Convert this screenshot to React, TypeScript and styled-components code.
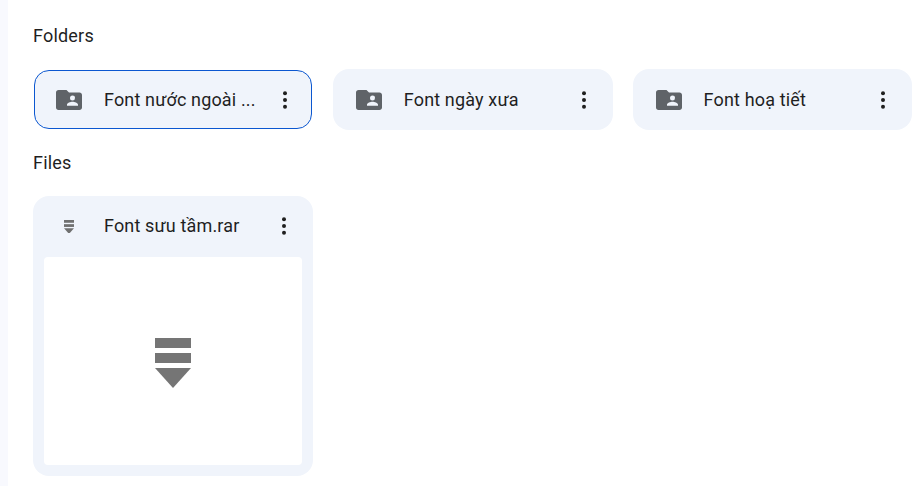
import React from "react";
import styled, { createGlobalStyle } from "styled-components";

const Global = createGlobalStyle`
  html, body { margin: 0; padding: 0; background: #fff; overflow: hidden; }
  body { font-family: Roboto, "Noto Sans", Arial, sans-serif; color: #1f1f1f; }
`;

const Page = styled.div`
  display: flex;
  width: 917px;
  height: 486px;
  overflow: hidden;
`;

const Rail = styled.div`
  width: 8px;
  flex: none;
  background: #f8f9fe;
`;

const Main = styled.main`
  flex: none;
  width: 884px;
  padding: 26px 0 0 25px;
`;

const SectionTitle = styled.h2`
  margin: 0;
  font-size: 18px;
  font-weight: 400;
  line-height: 20px;
  letter-spacing: 0.2px;
  color: #1f1f1f;
`;

const FolderGrid = styled.div`
  display: flex;
  gap: 20px;
  margin-top: 23px;
  margin-bottom: 23px;
`;

const FolderCard = styled.div<{ $selected?: boolean }>`
  box-sizing: border-box;
  width: 279.8px;
  height: 61px;
  display: flex;
  align-items: center;
  padding: 0 17px 0 23px;
  border-radius: 16px;
  background: #f0f4fb;
  ${(p) => p.$selected && `
    width: 277.8px;
    height: 59px;
    margin: 1px;
    padding: 0 14px 0 21px;
    border: 1px solid #0b57d0;
    border-radius: 15px;
  `}
`;

const IconSlot = styled.span`
  width: 48px;
  flex: none;
  display: flex;
  align-items: center;
  color: #5f6368;
`;

const Name = styled.span`
  flex: 1;
  min-width: 0;
  font-size: 18px;
  line-height: 20px;
  letter-spacing: 0.15px;
  white-space: nowrap;
  color: #1f1f1f;
`;

const Kebab = styled.span`
  flex: none;
  width: 24px;
  height: 24px;
  display: flex;
  align-items: center;
  justify-content: center;
  color: #1f1f1f;
`;

const FileCard = styled.div`
  box-sizing: border-box;
  width: 279.8px;
  height: 280px;
  margin-top: 23px;
  padding: 0 11px 11px;
  border-radius: 16px;
  background: #f0f4fb;
  display: flex;
  flex-direction: column;
`;

const FileHeader = styled.div`
  box-sizing: border-box;
  height: 61px;
  flex: none;
  display: flex;
  align-items: center;
  padding: 0 6px 2px 20px;
`;

const FileIconSlot = styled.span`
  width: 40px;
  flex: none;
  margin-top: 2px;
  display: flex;
  align-items: center;
`;

const Preview = styled.div`
  flex: 1;
  background: #fff;
  border-radius: 4px;
  padding-top: 4px;
  display: flex;
  align-items: center;
  justify-content: center;
`;

const FolderIcon = () => (
  <svg width="26" height="20" viewBox="0 0 26 20" fill="currentColor">
    <path
      fillRule="evenodd"
      d="M2.5 0H10.5L13 2.5H23.5C24.9 2.5 26 3.6 26 5V17.500C26 18.900 24.900 20 23.500 20H2.500C1.100 20 0 18.900 0 17.500V2.500C0 1.100 1.100 0 2.500 0ZM16.500 5.500A2.500 2.500 0 1 0 16.501 10.500A2.500 2.500 0 1 0 16.500 5.500ZM11 15.800H22V14.700C22 12.900 18.500 11.800 16.500 11.800C14.500 11.800 11 12.900 11 14.700Z"
    />
  </svg>
);

const DotsIcon = () => (
  <svg width="24" height="24" viewBox="0 0 24 24" fill="currentColor">
    <circle cx="12" cy="5.200" r="2" />
    <circle cx="12" cy="12" r="2" />
    <circle cx="12" cy="18.800" r="2" />
  </svg>
);

const ArchiveIcon = ({ size, color }: { size: number; color: string }) => (
  <svg width={size} height={size * (50 / 36)} viewBox="0 0 36 50" fill={color}>
    <rect x="0" y="0" width="36" height="10" />
    <rect x="0" y="15" width="36" height="10" />
    <path d="M0 30H36L18 50Z" />
  </svg>
);

const folders = [
  { name: "Font nước ngoài ...", selected: true },
  { name: "Font ngày xưa", selected: false },
  { name: "Font hoạ tiết", selected: false },
];

export default function App() {
  return (
    <Page>
      <Global />
      <Rail />
      <Main>
        <SectionTitle>Folders</SectionTitle>
        <FolderGrid>
          {folders.map((f) => (
            <FolderCard key={f.name} $selected={f.selected}>
              <IconSlot>
                <FolderIcon />
              </IconSlot>
              <Name>{f.name}</Name>
              <Kebab>
                <DotsIcon />
              </Kebab>
            </FolderCard>
          ))}
        </FolderGrid>
        <SectionTitle>Files</SectionTitle>
        <FileCard>
          <FileHeader>
            <FileIconSlot>
              <ArchiveIcon size={10} color="#707070" />
            </FileIconSlot>
            <Name>Font sưu tầm.rar</Name>
            <Kebab>
              <DotsIcon />
            </Kebab>
          </FileHeader>
          <Preview>
            <ArchiveIcon size={36} color="#757575" />
          </Preview>
        </FileCard>
      </Main>
    </Page>
  );
}
